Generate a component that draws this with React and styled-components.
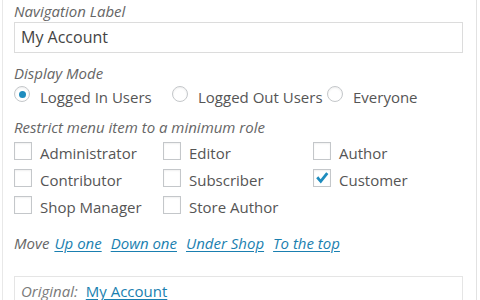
import React from "react";
import styled, { createGlobalStyle } from "styled-components";

const Global = createGlobalStyle`
  html, body { margin: 0; padding: 0; background: #fff; }
  body { font-family: "Open Sans", "Noto Sans", sans-serif; color: #555; overflow: hidden; }
`;

const Panel = styled.div`
  box-sizing: border-box;
  margin-left: 2px;
  width: 475px;
  height: 300px;
  overflow: hidden;
  border-left: 1px solid #e8e8e8;
  border-right: 1px solid #e2e2e2;
  padding: 1px 13px 0 11px;
`;

const FieldLabel = styled.div`
  font-style: italic;
  font-size: 15px;
  line-height: 20px;
  color: #666;
  margin-top: ${(p) => p.$mt || 0}px;
`;

const TextInput = styled.input`
  box-sizing: border-box;
  display: block;
  width: 100%;
  height: 31px;
  margin: 1px 0 0;
  padding: 0 6px 2px;
  border: 1px solid #dcdcdc;
  border-radius: 0;
  font-family: "Open Sans", sans-serif;
  font-size: 16px;
  color: #444;
  background: #fff;
  outline: none;
`;

const RadioRow = styled.div`
  display: flex;
  margin-top: 3px;
`;

const RadioOption = styled.label`
  display: flex;
  align-items: flex-start;
  width: ${(p) => (p.$w ? `${p.$w}px` : "auto")};
  flex: none;
  font-size: 15px;
  line-height: 22px;
  color: #555;
`;

const RadioDot = styled.span`
  box-sizing: border-box;
  width: 16px;
  height: 16px;
  margin-right: 10px;
  border: 1px solid #c4c7ca;
  border-radius: 50%;
  background: #fff;
  box-shadow: inset 0 1px 2px rgba(0, 0, 0, 0.07);
  display: flex;
  align-items: center;
  justify-content: center;
  flex: none;
  &::after {
    content: "";
    display: ${(p) => (p.$checked ? "block" : "none")};
    width: 7px;
    height: 7px;
    border-radius: 50%;
    background: #1e8cbe;
  }
`;

const RoleGrid = styled.div`
  display: grid;
  grid-template-columns: 149px 150px auto;
  row-gap: 5px;
  margin-top: 5px;
`;

const RoleOption = styled.label`
  display: flex;
  align-items: flex-start;
  font-size: 15px;
  line-height: 22px;
  color: #555;
`;

const CheckBox = styled.span`
  box-sizing: border-box;
  width: 18px;
  height: 18px;
  margin-right: 8px;
  border: 1px solid #c4c7ca;
  background: #fff;
  box-shadow: inset 0 1px 2px rgba(0, 0, 0, 0.06);
  display: flex;
  align-items: center;
  justify-content: center;
  flex: none;
`;

const MoveRow = styled.div`
  display: flex;
  align-items: baseline;
  margin-top: 15px;
  font-size: 15px;
  line-height: 20px;
  font-style: italic;
`;

const MoveLabel = styled.span`
  color: #666;
  margin-right: 5px;
`;

const Link = styled.a`
  color: #1a7fb0;
  text-decoration: underline;
  text-underline-offset: 2px;
  font-style: ${(p) => (p.$italic ? "italic" : "normal")};
  margin-right: ${(p) => p.$mr || 0}px;
  cursor: pointer;
`;

const OriginalBox = styled.div`
  box-sizing: border-box;
  margin-top: 23px;
  border: 1px solid #e5e5e5;
  padding: 4px 6px 10px;
  font-size: 15px;
  line-height: 20px;
  display: flex;
  align-items: baseline;
`;

const OriginalLabel = styled.span`
  font-style: italic;
  color: #7a7a7a;
  margin-right: 8px;
`;

const Check = () => (
  <svg width="16" height="16" viewBox="0 0 16 16">
    <path d="M2.2 8.3 L4.3 6.3 L6.6 9.2 L12.2 2.2 L14.4 4 L6.8 13.4 Z" fill="#1e8cbe" />
  </svg>
);

const roles = [
  ["Administrator", false],
  ["Editor", false],
  ["Author", false],
  ["Contributor", false],
  ["Subscriber", false],
  ["Customer", true],
  ["Shop Manager", false],
  ["Store Author", false],
];

export default function App() {
  return (
    <>
      <Global />
      <Panel>
        <FieldLabel>Navigation Label</FieldLabel>
        <TextInput defaultValue="My Account" />

        <FieldLabel $mt={10}>Display Mode</FieldLabel>
        <RadioRow>
          <RadioOption $w={158}>
            <RadioDot $checked />
            Logged In Users
          </RadioOption>
          <RadioOption $w={155}>
            <RadioDot />
            Logged Out Users
          </RadioOption>
          <RadioOption>
            <RadioDot />
            Everyone
          </RadioOption>
        </RadioRow>

        <FieldLabel $mt={9}>Restrict menu item to a minimum role</FieldLabel>
        <RoleGrid>
          {roles.map(([name, checked]) => (
            <RoleOption key={name}>
              <CheckBox>{checked && <Check />}</CheckBox>
              {name}
            </RoleOption>
          ))}
        </RoleGrid>

        <MoveRow>
          <MoveLabel>Move</MoveLabel>
          <Link $italic $mr={9}>Up one</Link>
          <Link $italic $mr={9}>Down one</Link>
          <Link $italic $mr={9}>Under Shop</Link>
          <Link $italic>To the top</Link>
        </MoveRow>

        <OriginalBox>
          <OriginalLabel>Original:</OriginalLabel>
          <Link>My Account</Link>
        </OriginalBox>
      </Panel>
    </>
  );
}
